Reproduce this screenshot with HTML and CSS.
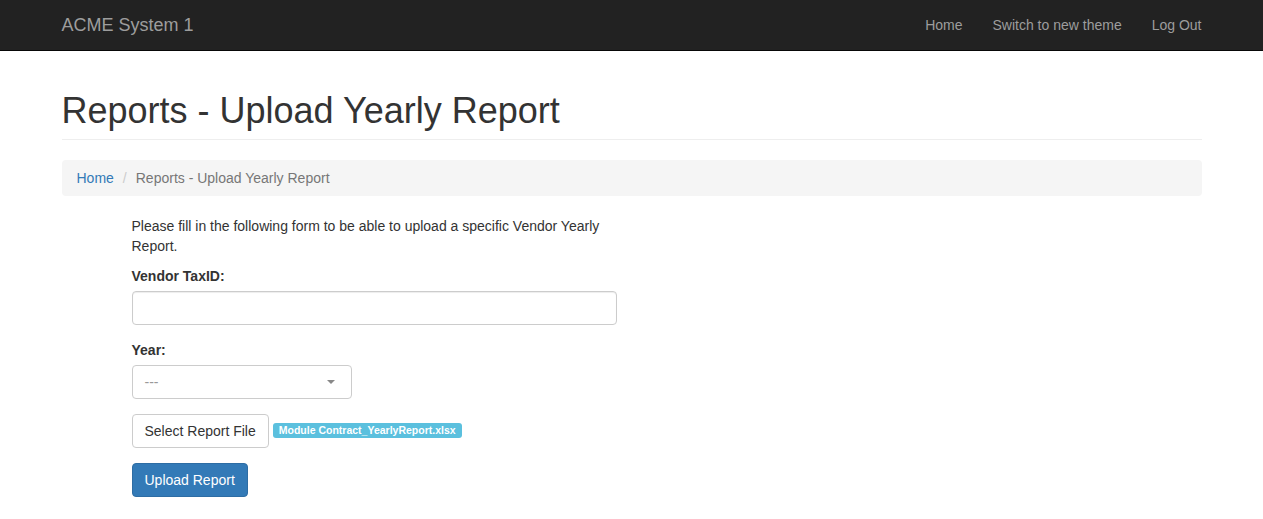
FILE: index.html
```html
<!DOCTYPE html>
<html lang="en">
<head>
<meta charset="utf-8">
<title>Reports - Upload Yearly Report</title>
<link rel="stylesheet" href="styles.css">
</head>
<body>
<nav class="navbar">
  <div class="container navbar-inner">
    <a class="brand" href="#">ACME System 1</a>
    <ul class="nav">
      <li><a href="#">Home</a></li>
      <li><a href="#">Switch to new theme</a></li>
      <li><a href="#">Log Out</a></li>
    </ul>
  </div>
</nav>
<main class="container">
  <div class="page-header"><h1>Reports - Upload Yearly Report</h1></div>
  <ol class="breadcrumb">
    <li><a href="#">Home</a></li>
    <li class="sep">/</li>
    <li class="active">Reports - Upload Yearly Report</li>
  </ol>
  <div class="form-col">
    <p class="intro">Please fill in the following form to be able to upload a specific Vendor Yearly Report.</p>
    <div class="form-group">
      <label class="label-text">Vendor TaxID:</label>
      <input class="form-control" type="text">
    </div>
    <div class="form-group">
      <label class="label-text">Year:</label>
      <div class="select-box">
        <span class="placeholder">---</span>
        <span class="caret"></span>
      </div>
    </div>
    <div class="form-group file-row">
      <button class="btn btn-default" type="button">Select Report File</button>
      <span class="badge-info">Module Contract_YearlyReport.xlsx</span>
    </div>
    <button class="btn btn-primary" type="button">Upload Report</button>
  </div>
</main>
</body>
</html>
```
FILE: styles.css
```css
* { box-sizing: border-box; }
html, body { margin: 0; padding: 0; }
body {
  font-family: "Liberation Sans", Arial, Helvetica, sans-serif;
  font-size: 14px;
  line-height: 20px;
  color: #333;
  background: #fff;
}
a { text-decoration: none; }
.container {
  width: 1170px;
  margin: 0 auto;
  padding: 0 15px;
}
.navbar {
  background: #222;
  border-bottom: 1px solid #080808;
  height: 51px;
}
.navbar-inner {
  display: flex;
  justify-content: space-between;
  align-items: stretch;
  height: 50px;
}
.brand {
  color: #9d9d9d;
  font-size: 18px;
  line-height: 20px;
  padding: 15px 15px;
  margin-left: -15px;
  height: 50px;
}
.nav {
  list-style: none;
  display: flex;
  margin: 0 -15px 0 0;
  padding: 0;
}
.nav a {
  display: block;
  color: #9d9d9d;
  padding: 15px 15px;
  line-height: 20px;
}
.page-header {
  margin: 40px 0 20px;
  padding-bottom: 8px;
  border-bottom: 1px solid #eee;
}
.page-header h1 {
  margin: 0;
  font-size: 36px;
  font-weight: 500;
  line-height: 1.1;
  color: #333;
}
.breadcrumb {
  list-style: none;
  display: flex;
  margin: 0 0 20px;
  padding: 8px 15px;
  background: #f5f5f5;
  border-radius: 4px;
}
.breadcrumb a { color: #337ab7; }
.breadcrumb .sep { color: #ccc; padding: 0 5px 0 9px; }
.breadcrumb .active { color: #777; padding-left: 4px; }
.form-col {
  width: 555px;
  padding-left: 70px;
}
.intro { margin: 0 0 10px; }
.form-group { margin-bottom: 15px; }
.label-text {
  display: block;
  font-weight: bold;
  margin-bottom: 5px;
}
.form-control {
  display: block;
  width: 100%;
  height: 34px;
  padding: 6px 12px;
  font-size: 14px;
  font-family: inherit;
  border: 1px solid #ccc;
  border-radius: 4px;
  box-shadow: inset 0 1px 1px rgba(0,0,0,.075);
  background: #fff;
}
.select-box {
  width: 220px;
  height: 34px;
  border: 1px solid #ccc;
  border-radius: 4px;
  display: flex;
  align-items: center;
  justify-content: space-between;
  padding: 0 16px 0 12px;
  background: #fff;
}
.placeholder { color: #999; }
.caret {
  width: 0;
  height: 0;
  border-left: 4px solid transparent;
  border-right: 4px solid transparent;
  border-top: 4px solid #888;
}
.file-row {
  display: flex;
  align-items: center;
  gap: 4px;
}
.btn {
  display: inline-block;
  height: 34px;
  padding: 6px 12px;
  font-size: 14px;
  line-height: 20px;
  font-family: inherit;
  border: 1px solid transparent;
  border-radius: 4px;
  cursor: pointer;
}
.btn-default { color: #333; background: #fff; border-color: #ccc; }
.btn-primary { color: #fff; background: #337ab7; border-color: #2e6da4; }
.badge-info {
  display: inline-block;
  background: #5bc0de;
  color: #fff;
  font-weight: bold;
  font-size: 10.5px;
  line-height: 1;
  padding: 2px 6px 3px;
  border-radius: 3px;
  white-space: nowrap;
}
```
